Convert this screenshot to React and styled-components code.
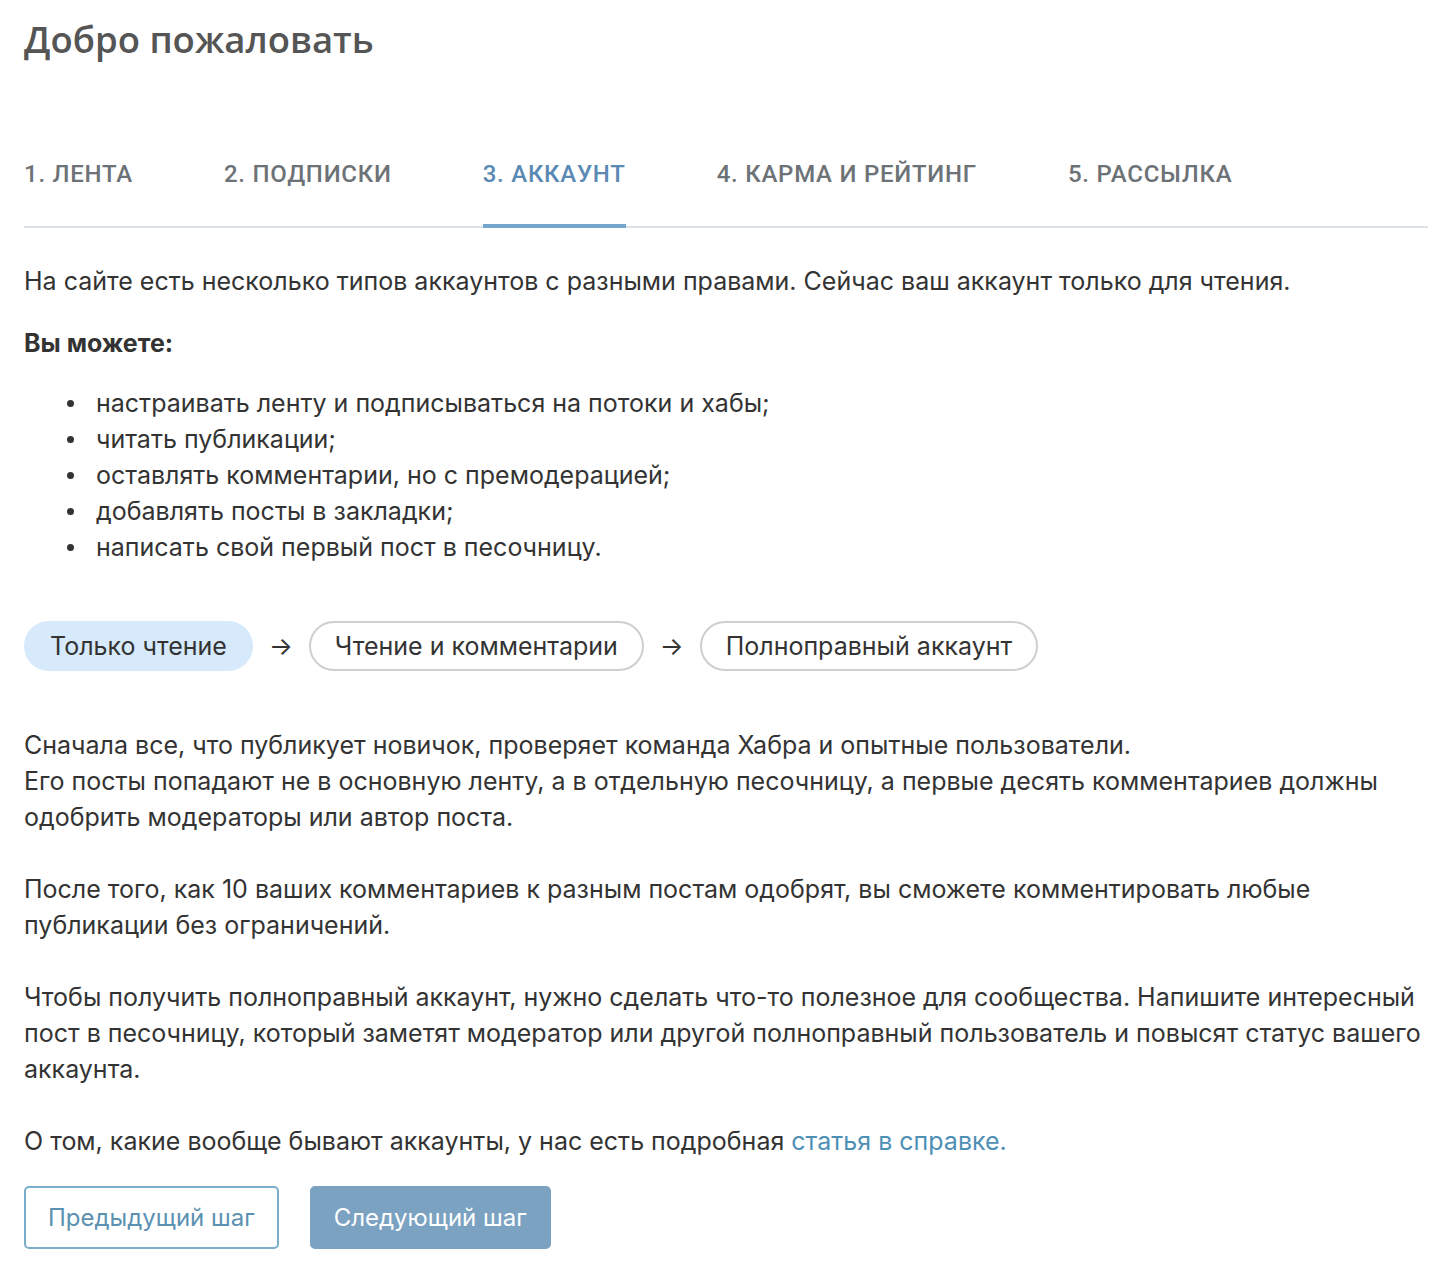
import React from "react";
import styled, { createGlobalStyle } from "styled-components";

const Global = createGlobalStyle`
  html, body { margin: 0; padding: 0; background: #fff; }
  body { font-family: Inter, "Noto Sans", sans-serif; color: #333; }
`;

const Page = styled.div`
  padding: 14px 16px 0 24px;
  width: 1404px;
`;

const Title = styled.h1`
  margin: 0;
  font-family: "Open Sans", "Noto Sans", sans-serif;
  font-weight: 600;
  font-size: 36.5px;
  line-height: 50px;
  color: #555;
`;

const Tabs = styled.div`
  display: flex;
  gap: 91px;
  margin-top: 96px;
  border-bottom: 2px solid #dde2e6;
`;

const Tab = styled.div`
  font-family: Roboto, "Noto Sans", sans-serif;
  font-weight: 500;
  font-size: 24px;
  line-height: 28px;
  letter-spacing: 0.75px;
  text-transform: uppercase;
  color: ${(p) => (p.$active ? "#5a8ab3" : "#6d7277")};
  padding-bottom: 36px;
  margin-bottom: -2px;
  border-bottom: 4px solid ${(p) => (p.$active ? "#76a6cc" : "transparent")};
`;

const Text = styled.p`
  margin: ${(p) => p.$m || "0"};
  font-size: 25px;
  line-height: 36px;
  color: #333;
`;

const Strong = styled.p`
  margin: 26px 0 0;
  font-size: 25px;
  font-weight: 700;
  line-height: 36px;
`;

const List = styled.ul`
  margin: 24px 0 0;
  padding-left: 72px;
  list-style: none;
  font-size: 25px;
  line-height: 36px;
`;

const Item = styled.li`
  &::before {
    content: "";
    display: inline-block;
    width: 7px;
    height: 7px;
    border-radius: 50%;
    background: #333;
    vertical-align: middle;
    margin-left: -29px;
    margin-right: 22px;
    position: relative;
    top: -2px;
  }
`;

const Steps = styled.div`
  display: flex;
  align-items: center;
  gap: 16px;
  margin-top: 56px;
`;

const Pill = styled.div`
  height: 50px;
  box-sizing: border-box;
  display: flex;
  align-items: center;
  padding: 0 24px;
  border-radius: 25px;
  font-size: 25px;
  color: #333;
  background: ${(p) => (p.$active ? "#d6eafc" : "#fff")};
  border: 2px solid ${(p) => (p.$active ? "#d6eafc" : "#cfcfcf")};
`;

const Arrow = styled.span`
  font-size: 25px;
  color: #333;
`;

const Link = styled.a`
  color: #4e8fb6;
  text-decoration: none;
`;

const Buttons = styled.div`
  display: flex;
  gap: 31px;
  margin-top: 27px;
`;

const Button = styled.button`
  height: 63px;
  box-sizing: border-box;
  padding: 0 22px;
  border-radius: 5px;
  font-family: Inter, "Noto Sans", sans-serif;
  font-size: 24px;
  border: 2px solid ${(p) => (p.$primary ? "#7ba2c1" : "#79adc9")};
  background: ${(p) => (p.$primary ? "#7ba2c1" : "#fff")};
  color: ${(p) => (p.$primary ? "#fff" : "#5b91b1")};
`;

export default function App() {
  return (
    <Page>
      <Global />
      <Title>Добро пожаловать</Title>
      <Tabs>
        <Tab>1. Лента</Tab>
        <Tab>2. Подписки</Tab>
        <Tab $active>3. Аккаунт</Tab>
        <Tab>4. Карма и рейтинг</Tab>
        <Tab>5. Рассылка</Tab>
      </Tabs>
      <Text $m="35px 0 0">
        На сайте есть несколько типов аккаунтов с разными правами. Сейчас ваш аккаунт только для чтения.
      </Text>
      <Strong>Вы можете:</Strong>
      <List>
        <Item>настраивать ленту и подписываться на потоки и хабы;</Item>
        <Item>читать публикации;</Item>
        <Item>оставлять комментарии, но с премодерацией;</Item>
        <Item>добавлять посты в закладки;</Item>
        <Item>написать свой первый пост в песочницу.</Item>
      </List>
      <Steps>
        <Pill $active>Только чтение</Pill>
        <Arrow>→</Arrow>
        <Pill>Чтение и комментарии</Pill>
        <Arrow>→</Arrow>
        <Pill>Полноправный аккаунт</Pill>
      </Steps>
      <Text $m="56px 0 0">
        Сначала все, что публикует новичок, проверяет команда Хабра и опытные пользователи.
        <br />
        Его посты попадают не в основную ленту, а в отдельную песочницу, а первые десять комментариев должны одобрить модераторы или автор поста.
      </Text>
      <Text $m="36px 0 0">
        После того, как 10 ваших комментариев к разным постам одобрят, вы сможете комментировать любые публикации без ограничений.
      </Text>
      <Text $m="36px 0 0">
        Чтобы получить полноправный аккаунт, нужно сделать что-то полезное для сообщества. Напишите интересный пост в песочницу, который заметят модератор или другой полноправный пользователь и повысят статус вашего аккаунта.
      </Text>
      <Text $m="36px 0 0">
        О том, какие вообще бывают аккаунты, у нас есть подробная <Link href="#">статья в справке.</Link>
      </Text>
      <Buttons>
        <Button>Предыдущий шаг</Button>
        <Button $primary>Следующий шаг</Button>
      </Buttons>
    </Page>
  );
}
